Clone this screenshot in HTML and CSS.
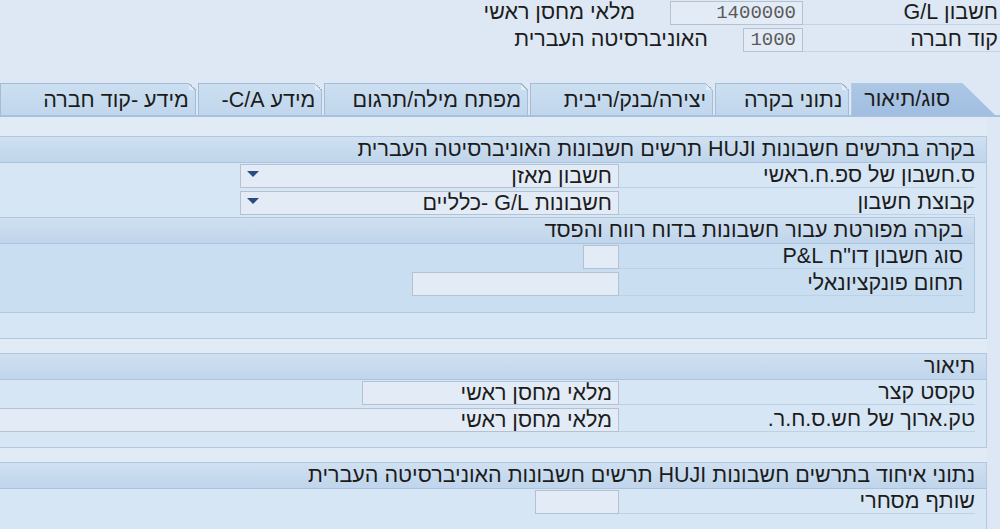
FILE: index.html
```html
<!DOCTYPE html>
<html lang="he" dir="rtl">
<head>
    <meta charset="UTF-8">
    <meta name="viewport" content="width=device-width, initial-scale=1.0">
    <title>הצגת חשבון G/L</title>
    <link rel="stylesheet" href="styles.css">
</head>
<body>

    <!-- Key fields -->
    <div class="head">
        <div class="head-row">
            <span class="head-label">חשבון G/L</span>
            <span class="field num gl">1400000</span>
            <span class="head-text">מלאי מחסן ראשי</span>
        </div>
        <div class="head-row">
            <span class="head-label">קוד חברה</span>
            <span class="field num cc">1000</span>
            <span class="head-text">האוניברסיטה העברית</span>
        </div>
    </div>

    <!-- Tab strip -->
    <div class="tabs">
        <div class="tab active">סוג/תיאור</div>
        <div class="tab t2">נתוני בקרה</div>
        <div class="tab t3">יצירה/בנק/ריבית</div>
        <div class="tab t4">מפתח מילה/תרגום</div>
        <div class="tab t5">מידע C/A-</div>
        <div class="tab t6">מידע -קוד חברה</div>
    </div>

    <div class="content">

        <!-- Control in chart of accounts -->
        <div class="box">
            <div class="box-title">בקרה בתרשים חשבונות HUJI תרשים חשבונות האוניברסיטה העברית</div>
            <div class="row">
                <span class="label">ס.חשבון של ספ.ח.ראשי</span>
                <span class="field select">חשבון מאזן <i class="arrow"></i></span>
            </div>
            <div class="row">
                <span class="label">קבוצת חשבון</span>
                <span class="field select">חשבונות G/L -כלליים <i class="arrow"></i></span>
            </div>

            <div class="box sub">
                <div class="box-title">בקרה מפורטת עבור חשבונות בדוח רווח והפסד</div>
                <div class="row">
                    <span class="label">סוג חשבון דו"ח P&amp;L</span>
                    <span class="field pl"></span>
                </div>
                <div class="row">
                    <span class="label">תחום פונקציונאלי</span>
                    <span class="field func"></span>
                </div>
            </div>
        </div>

        <!-- Description -->
        <div class="box desc">
            <div class="box-title">תיאור</div>
            <div class="row">
                <span class="label">טקסט קצר</span>
                <span class="field short">מלאי מחסן ראשי</span>
            </div>
            <div class="row">
                <span class="label">טק.ארוך של חש.ס.ח.ר.</span>
                <span class="field long">מלאי מחסן ראשי</span>
            </div>
        </div>

        <!-- Consolidation data -->
        <div class="box cons">
            <div class="box-title">נתוני איחוד בתרשים חשבונות HUJI תרשים חשבונות האוניברסיטה העברית</div>
            <div class="row">
                <span class="label">שותף מסחרי</span>
                <span class="field partner"></span>
            </div>
        </div>

    </div>

</body>
</html>
```

FILE: styles.css
```css
body {
    margin: 0;
    padding-top: 1px;
    background-color: #dde8f4;
    font-family: "Liberation Sans", Arial, sans-serif;
    font-size: 21.5px;
    color: #1c1c1c;
    overflow: hidden;
}

/* key fields */
.head-row {
    display: flex;
    align-items: flex-start;
    height: 24px;
    margin-bottom: 3px;
}
.head-label {
    box-sizing: border-box;
    width: 197px;
    height: 24px;
    line-height: 23px;
    padding-right: 2px;
    border-bottom: 1px solid #c3d4e6;
    white-space: nowrap;
}
.head-text {
    margin-right: 35px;
    line-height: 23px;
}

/* input fields */
.field {
    box-sizing: border-box;
    display: flex;
    align-items: center;
    height: 24px;
    padding: 0 6px;
    background-color: #e3ecf6;
    border: 1px solid #b3c1d0;
    white-space: nowrap;
}
.num {
    font-family: "Liberation Mono", "Courier New", monospace;
    font-size: 19px;
    color: #5a5a5a;
}
.gl { width: 133px; }
.cc { width: 60px; }

/* tabs */
.tabs {
    display: flex;
    gap: 2px;
    height: 32px;
    margin-top: 31px;
    padding-right: 5px;
    border-bottom: 2px solid #a5c1e2;
}
.tab {
    position: relative;
    box-sizing: border-box;
    height: 32px;
    padding: 0 6px;
    line-height: 32px;
    background: linear-gradient(#ccdff1, #c1d6ec);
    border: 1px solid #a4bcd8;
    border-bottom: none;
    white-space: nowrap;
}
.tab::after {
    content: "";
    position: absolute;
    top: -1px;
    right: -1px;
    width: 7px;
    height: 7px;
    background: linear-gradient(to bottom left, #dde8f4 50%, #9fb7d3 50%, #9fb7d3 62%, #e4edf7 62%);
}
.tab.active {
    width: 146px;
    padding: 0 45px 0 0;
    background: linear-gradient(#adc7e5, #a1bee1);
    border: none;
    clip-path: polygon(0 0, 111px 0, 100% 100%, 0 100%);
}
.tab.active::after {
    display: none;
}
.t2 { width: 137px; }
.t3 { width: 187px; }
.t4 { width: 208px; }
.t5 { width: 127px; }
.t6 { width: 200px; }

/* group boxes */
.content {
    background-color: #e1ebf6;
    margin-left: -20px;
    margin-right: 13px;
    padding-top: 19px;
}
.box {
    padding: 0 11px 25px 0;
    background-color: #d7e6f4;
    border: 1px solid #b2c8e1;
    border-left: none;
}
.box-title {
    box-sizing: border-box;
    height: 26px;
    margin-right: -11px;
    padding-right: 11px;
    line-height: 25px;
    background: linear-gradient(#cfe0f1, #c0d5eb);
    border-bottom: 1px solid #aac3df;
    white-space: nowrap;
}
.row {
    display: flex;
    align-items: flex-start;
    height: 27px;
    padding-top: 1px;
    box-sizing: border-box;
}
.label {
    box-sizing: border-box;
    width: 356px;
    height: 24px;
    line-height: 23px;
    border-bottom: 1px solid #bfd1e5;
    white-space: nowrap;
}
.sub {
    padding-bottom: 14px;
    background-color: #cadef2;
}
.sub .label {
    width: 344px;
}
.desc {
    margin-top: 14px;
    padding-bottom: 13px;
}
.cons {
    margin-top: 14px;
}

.select {
    width: 379px;
}
.arrow {
    margin-right: auto;
    width: 0;
    height: 0;
    border-left: 6px solid transparent;
    border-right: 6px solid transparent;
    border-top: 6px solid #2b4a7d;
    margin-top: -4px;
}
.pl { width: 36px; }
.func { width: 207px; }
.short { width: 257px; }
.long { flex: 1; }
.partner { width: 84px; }
```
